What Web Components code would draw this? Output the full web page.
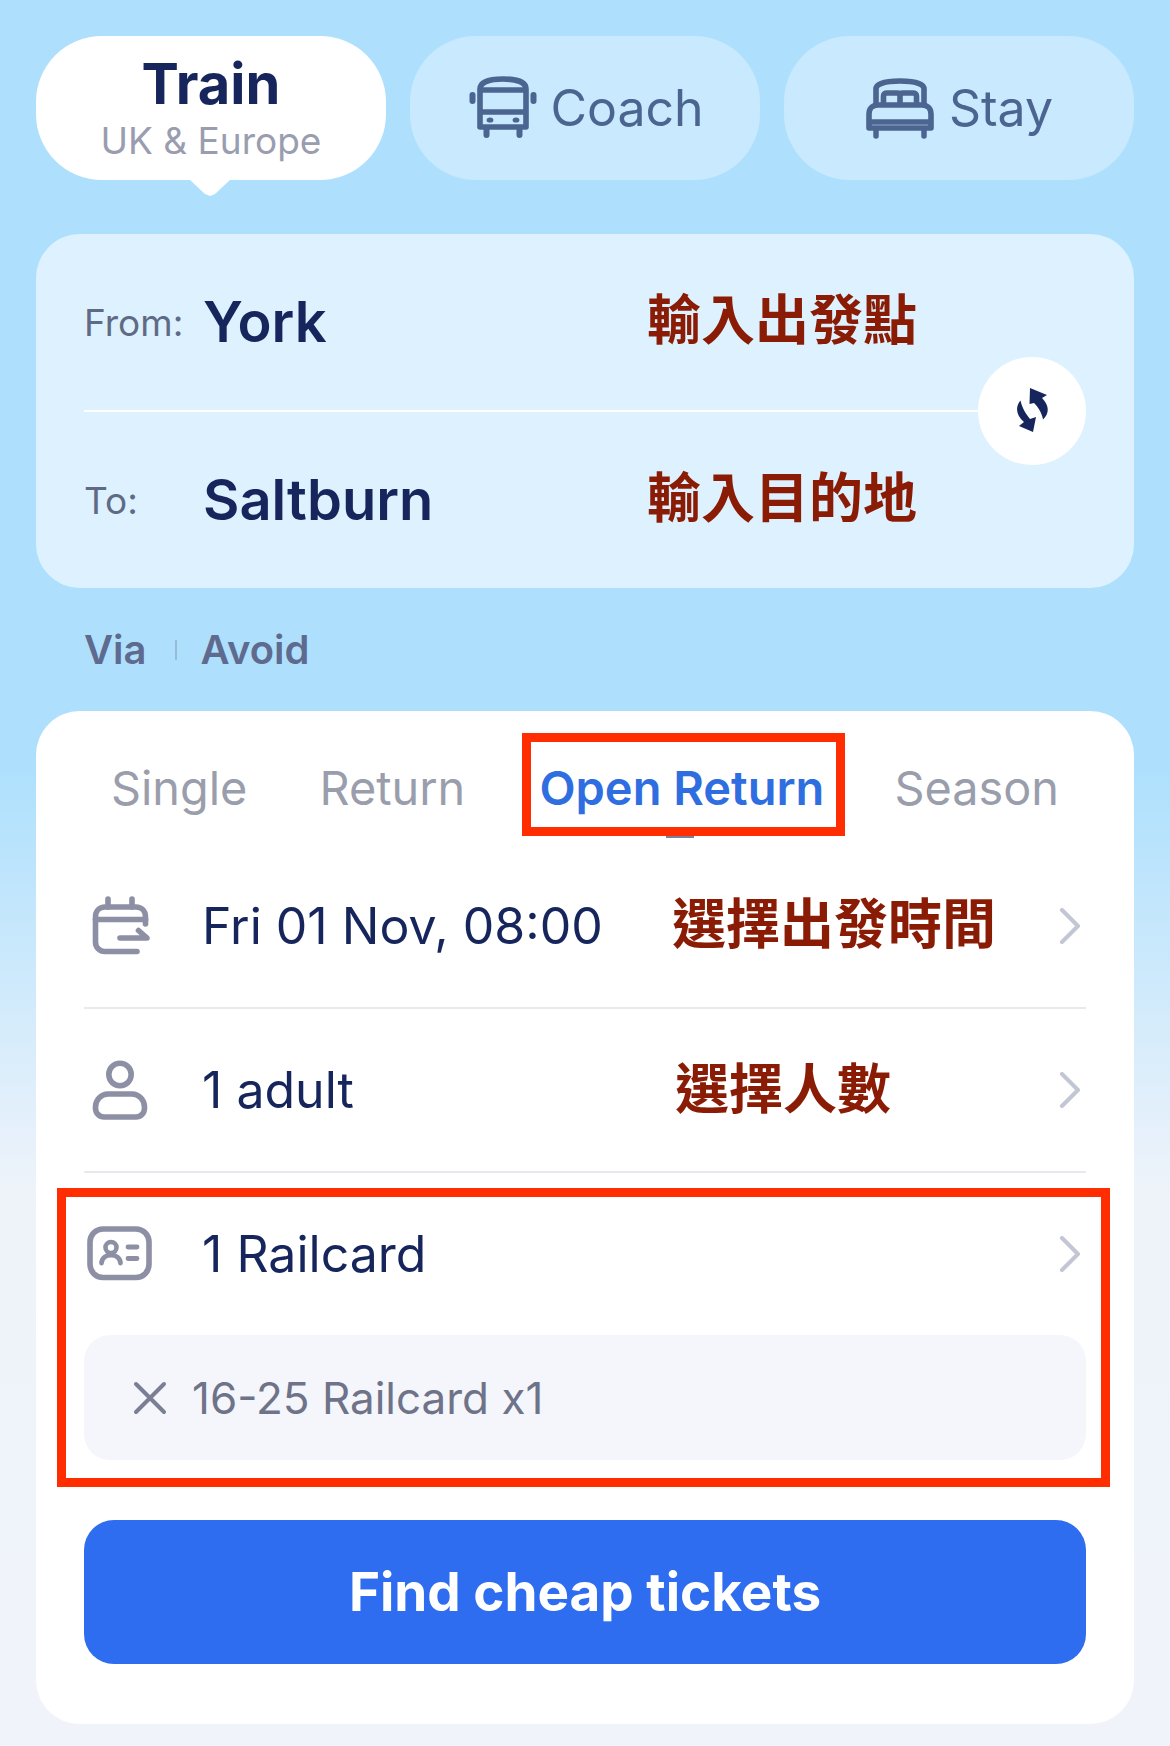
<!DOCTYPE html>
<html lang="en">
<head>
<meta charset="utf-8">
<title>Train search</title>
<style>
html, body {
    margin: 0;
    padding: 0;
}
body {
    width: 1170px;
    height: 1746px;
    overflow: hidden;
    font-family: Inter, "Liberation Sans", "Noto Sans CJK TC", sans-serif;
    background: linear-gradient(to bottom, #aee0fd 0, #aee0fd 770px, #eef3fa 1190px, #f0f4fa 1746px);
}
</style>
</head>
<body>
<search-page>
    <mode-tabs slot="modes">
        <mode-tab active sub="UK &amp; Europe">Train</mode-tab>
        <mode-tab>
            <svg slot="icon" width="90" height="80" viewBox="0 0 90 80" fill="none" stroke="#4b6590" stroke-width="5.6">
                <path d="M20 24C20 17 30 14 43 14C56 14 66 17 66 24V62H20Z" stroke-linejoin="round"/>
                <path d="M20 25H66M20 47H66"/>
                <rect x="9.5" y="27" width="6" height="12" rx="3" fill="#4b6590" stroke="none"/>
                <rect x="70.5" y="27" width="6" height="12" rx="3" fill="#4b6590" stroke="none"/>
                <ellipse cx="30" cy="55" rx="3.4" ry="2.6" fill="#4b6590" stroke="none"/>
                <ellipse cx="56" cy="55" rx="3.4" ry="2.6" fill="#4b6590" stroke="none"/>
                <path d="M26.5 64V70M59.5 64V70" stroke-width="6" stroke-linecap="round"/>
            </svg>
            Coach
        </mode-tab>
        <mode-tab>
            <svg slot="icon" width="90" height="80" viewBox="0 0 90 80" fill="none" stroke="#4b6590" stroke-width="5.6" stroke-linejoin="round">
                <path d="M17 40V24C17 19 26 16 41 16C56 16 65 19 65 24V40"/>
                <path d="M24.5 38V31C24.5 29 26 28 28 28H38C40 28 41 29 41 31V38M41 38V31C41 29 42 28 44 28H54C56 28 57.5 29 57.5 31V38"/>
                <path d="M10 63V49C10 43 14 40 19 40H63C68 40 72 43 72 49V63Z"/>
                <path d="M10 57H72"/>
                <path d="M17 65V71M65 65V71" stroke-width="5.5" stroke-linecap="round"/>
            </svg>
            Stay
        </mode-tab>
    </mode-tabs>

    <route-panel slot="route">
        <route-row label="From:" value="York" divider>輸入出發點</route-row>
        <route-row label="To:" value="Saltburn">輸入目的地</route-row>
    </route-panel>

    <via-links slot="via"></via-links>

    <search-card slot="card">
        <fare-tabs>
            <fare-tab>Single</fare-tab>
            <fare-tab>Return</fare-tab>
            <fare-tab active>Open Return</fare-tab>
            <fare-tab>Season</fare-tab>
        </fare-tabs>
        <option-row text="Fri 01 Nov, 08:00" divider>
            <svg slot="icon" width="90" height="90" viewBox="0 0 90 90" fill="none" stroke="#8d8fa5" stroke-width="5.6" stroke-linecap="round" stroke-linejoin="round">
                <path d="M28 18V26M52 18V26"/>
                <path d="M57 70.5H25C19.5 70.5 15.5 66.5 15.5 61V36C15.5 30 19.5 26 25 26H56C61.5 26 65.5 30 65.5 36V43"/>
                <path d="M15.5 38.5H65.5"/>
                <path d="M40 57H67L58.5 49.5"/>
            </svg>
            選擇出發時間
        </option-row>
        <option-row text="1 adult" divider style="--note-shift:3px;height:164px">
            <svg slot="icon" width="90" height="90" viewBox="0 0 90 90" fill="none" stroke="#8d8fa5" stroke-width="5.6">
                <circle cx="40" cy="29.5" r="11.2"/>
                <path d="M28 49H52C59 49 64.5 55 64.5 62V63C64.5 68.5 60.5 72 56 72H24C19.5 72 15.5 68.5 15.5 63V62C15.5 55 21 49 28 49Z"/>
            </svg>
            選擇人數
        </option-row>
        <mark-box>
            <option-row text="1 Railcard" short>
                <svg slot="icon" width="90" height="90" viewBox="0 0 90 90" fill="none" stroke="#8d8fa5" stroke-width="5.6" stroke-linecap="round">
                    <rect x="10" y="20" width="59" height="48.5" rx="13"/>
                    <circle cx="31" cy="38.5" r="5.5" stroke-width="4.6"/>
                    <path d="M21.5 54C22 49 26 46 31 46C36 46 40 49 40.5 54" stroke-width="4.8"/>
                    <path d="M48 38H57M48 49.5H57" stroke-width="4.8"/>
                </svg>
            </option-row>
            <railcard-chip>16-25 Railcard x1</railcard-chip>
        </mark-box>
        <find-button>Find cheap tickets</find-button>
    </search-card>
</search-page>

<script>
class SearchPage extends HTMLElement {
    constructor() {
        super()
        this.attachShadow({mode: 'open'}).innerHTML = `
<style>
:host {
    display: flex;
    flex-direction: column;
    padding: 36px 36px 0;
    box-sizing: border-box;
    width: 1170px;
}
</style>
<slot name="modes"></slot>
<slot name="route"></slot>
<slot name="via"></slot>
<slot name="card"></slot>
`
    }
}

class ModeTabs extends HTMLElement {
    constructor() {
        super()
        this.attachShadow({mode: 'open'}).innerHTML = `
<style>
:host {
    display: flex;
    gap: 24px;
    margin-bottom: 54px;
}
</style>
<slot></slot>
`
    }
}

class ModeTab extends HTMLElement {
    constructor() {
        super()
        const active = this.hasAttribute('active')
        this.attachShadow({mode: 'open'}).innerHTML = `
<style>
:host {
    display: flex;
    flex: 1;
    align-items: center;
    justify-content: center;
    position: relative;
    height: 144px;
    border-radius: 66px;
    background: ${active ? '#ffffff' : '#c8e9fe'};
    color: #4b6590;
    font-size: 50px;
}
#main {
    display: flex;
    flex-direction: column;
    align-items: center;
}
#title {
    color: #16265c;
    font-size: 56px;
    font-weight: 700;
    line-height: 64px;
}
#sub {
    color: #9a9db0;
    font-size: 37px;
    line-height: 46px;
    margin-top: 2px;
}
#tail {
    position: absolute;
    left: 50%;
    top: 143px;
    width: 42px;
    height: 17px;
    margin-left: -22px;
    background: #ffffff;
    clip-path: polygon(0 0, 100% 0, 62% 88%, 50% 100%, 38% 88%);
}
::slotted(svg) {
    margin-left: -6px;
    margin-bottom: 6px;
}
</style>
${active ? `<div id="main"><div id="title"><slot></slot></div><div id="sub">${this.getAttribute('sub')}</div></div><div id="tail"></div>`
         : `<slot name="icon"></slot><slot></slot>`}
`
    }
}

class RoutePanel extends HTMLElement {
    constructor() {
        super()
        this.attachShadow({mode: 'open'}).innerHTML = `
<style>
:host {
    display: block;
    position: relative;
    height: 354px;
    border-radius: 44px;
    background: #ddf2fe;
    padding: 0 48px;
    box-sizing: border-box;
}
#swap {
    position: absolute;
    left: 942px;
    top: 123px;
    width: 108px;
    height: 108px;
    border-radius: 50%;
    background: #ffffff;
}
</style>
<slot></slot>
<div id="swap">
    <svg width="108" height="108" viewBox="8 8 108 108" fill="#16265c">
        <path d="M60 39L77 46L72 49C79 56 80 64 73 70.5C72 64 68 58 64 54L59.5 55Z"/>
        <path d="M66 68L63 83L49 77L54 73C46 66 45 58 50.5 51.5C52 59 56 65 60 70Z"/>
    </svg>
</div>
`
    }
}

class RouteRow extends HTMLElement {
    constructor() {
        super()
        this.attachShadow({mode: 'open'}).innerHTML = `
<style>
:host {
    display: flex;
    align-items: center;
    height: 176px;
    box-sizing: border-box;
}
:host([divider]) {
    height: 178px;
    border-bottom: 2px solid #ffffff;
}
#label {
    flex: 0 0 119px;
    color: #5f6b85;
    font-size: 37px;
}
#value {
    flex: 0 0 444px;
    color: #16265c;
    font-size: 56px;
    font-weight: 600;
}
#note {
    color: #8a1c06;
    font-family: "Noto Sans CJK TC", sans-serif;
    font-size: 54px;
    font-weight: 700;
    margin-bottom: 12px;
}
</style>
<div id="label">${this.getAttribute('label')}</div>
<div id="value">${this.getAttribute('value')}</div>
<div id="note"><slot></slot></div>
`
    }
}

class ViaLinks extends HTMLElement {
    constructor() {
        super()
        this.attachShadow({mode: 'open'}).innerHTML = `
<style>
:host {
    display: flex;
    align-items: center;
    height: 123px;
    padding-left: 48px;
    color: #5f6a8f;
    font-size: 40px;
    font-weight: 600;
}
#bar {
    width: 2px;
    height: 20px;
    background: #98bcd8;
    margin: 0 24px 0 28px;
}
</style>
<span>Via</span><span id="bar"></span><span>Avoid</span>
`
    }
}

class SearchCard extends HTMLElement {
    constructor() {
        super()
        this.attachShadow({mode: 'open'}).innerHTML = `
<style>
:host {
    display: block;
    background: #ffffff;
    border-radius: 44px;
    padding: 0 48px 60px;
    box-sizing: border-box;
}
</style>
<slot></slot>
`
    }
}

class FareTabs extends HTMLElement {
    constructor() {
        super()
        this.attachShadow({mode: 'open'}).innerHTML = `
<style>
:host {
    display: flex;
    justify-content: space-between;
    align-items: center;
    height: 133px;
    margin: 0 -48px;
    padding: 20px 75px 0;
    box-sizing: border-box;
}
</style>
<slot></slot>
`
    }
}

class FareTab extends HTMLElement {
    constructor() {
        super()
        const active = this.hasAttribute('active')
        this.attachShadow({mode: 'open'}).innerHTML = `
<style>
:host {
    display: block;
    position: relative;
    left: ${active ? 2 : 0}px;
    color: ${active ? '#2f6ee0' : '#9a9eac'};
    font-size: ${active ? 47 : 46.8}px;
    font-weight: ${active ? 600 : 400};
}
#box {
    position: absolute;
    left: -17px;
    right: -21px;
    top: -26px;
    bottom: -20px;
    border: 9px solid #ff2d00;
}
#bar {
    position: absolute;
    left: 127px;
    bottom: -22px;
    width: 28px;
    height: 2px;
    background: #7a7f9c;
}
</style>
<slot></slot>
${active ? '<div id="bar"></div><div id="box"></div>' : ''}
`
    }
}

class OptionRow extends HTMLElement {
    constructor() {
        super()
        this.attachShadow({mode: 'open'}).innerHTML = `
<style>
:host {
    display: flex;
    align-items: center;
    height: 165px;
    box-sizing: border-box;
}
:host([divider]) {
    border-bottom: 2px solid #e8e9ee;
}
:host([short]) {
    height: 162px;
}
#icon {
    flex: 0 0 122px;
    display: flex;
    margin-left: -4px;
}
#text {
    flex: 0 0 470px;
    color: #16265c;
    font-size: 50px;
}
#note {
    color: #8a1c06;
    font-family: "Noto Sans CJK TC", sans-serif;
    font-size: 54px;
    font-weight: 700;
    margin-bottom: 10px;
    margin-left: var(--note-shift, 0);
}
#chevron {
    margin-left: auto;
    margin-right: 5px;
}
</style>
<div id="icon"><slot name="icon"></slot></div>
<div id="text">${this.getAttribute('text')}</div>
<div id="note"><slot></slot></div>
<svg id="chevron" width="22" height="36" viewBox="0 0 22 36" fill="none" stroke="#c3c6d4" stroke-width="4" stroke-linecap="round" stroke-linejoin="round">
    <path d="M3 2L19 18L3 34"/>
</svg>
`
    }
}

class MarkBox extends HTMLElement {
    constructor() {
        super()
        this.attachShadow({mode: 'open'}).innerHTML = `
<style>
:host {
    display: block;
    position: relative;
}
#box {
    position: absolute;
    left: -27px;
    right: -24px;
    top: 15px;
    bottom: -27px;
    border: 9px solid #ff2d00;
}
</style>
<slot></slot>
<div id="box"></div>
`
    }
}

class RailcardChip extends HTMLElement {
    constructor() {
        super()
        this.attachShadow({mode: 'open'}).innerHTML = `
<style>
:host {
    display: flex;
    align-items: center;
    height: 125px;
    border-radius: 26px;
    background: #f4f6fb;
    padding-left: 48px;
    color: #6f7389;
    font-size: 44px;
}
svg {
    margin-right: 24px;
}
</style>
<svg width="36" height="36" viewBox="0 0 36 36" fill="none" stroke="#7b7f93" stroke-width="4" stroke-linecap="round">
    <path d="M4 4L32 32M32 4L4 32"/>
</svg>
<slot></slot>
`
    }
}

class FindButton extends HTMLElement {
    constructor() {
        super()
        this.attachShadow({mode: 'open'}).innerHTML = `
<style>
:host {
    display: flex;
    align-items: center;
    justify-content: center;
    height: 144px;
    margin-top: 60px;
    border-radius: 30px;
    background: #2e6cf0;
    color: #ffffff;
    font-size: 53px;
    font-weight: 700;
}
</style>
<slot></slot>
`
    }
}

customElements.define('search-page', SearchPage)
customElements.define('mode-tabs', ModeTabs)
customElements.define('mode-tab', ModeTab)
customElements.define('route-panel', RoutePanel)
customElements.define('route-row', RouteRow)
customElements.define('via-links', ViaLinks)
customElements.define('search-card', SearchCard)
customElements.define('fare-tabs', FareTabs)
customElements.define('fare-tab', FareTab)
customElements.define('option-row', OptionRow)
customElements.define('mark-box', MarkBox)
customElements.define('railcard-chip', RailcardChip)
customElements.define('find-button', FindButton)
</script>
</body>
</html>
